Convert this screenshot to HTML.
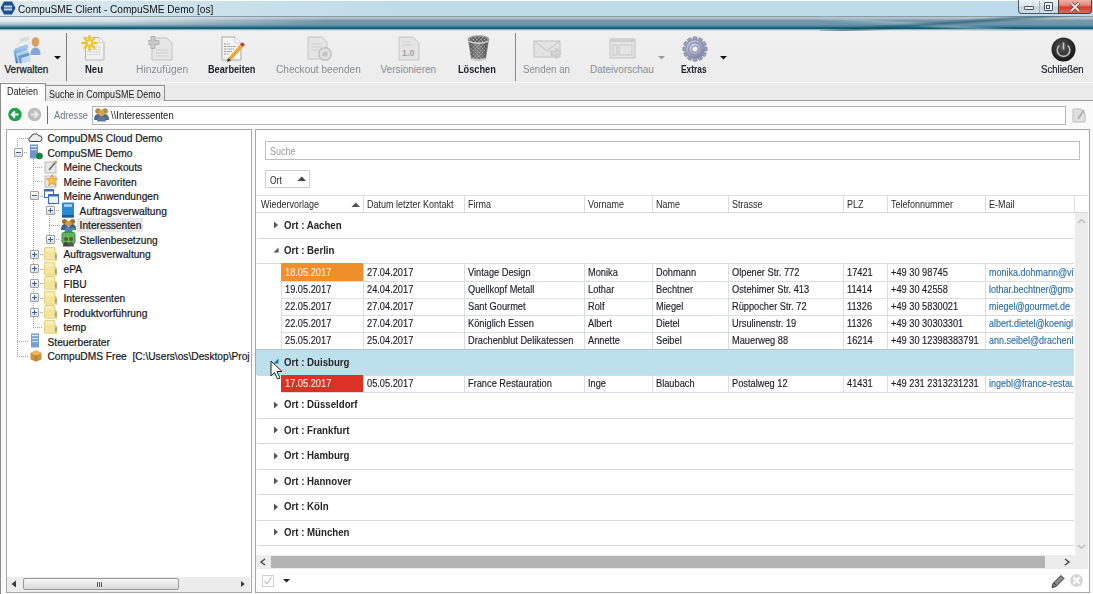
<!DOCTYPE html><html><head><meta charset="utf-8"><style>
*{box-sizing:border-box;margin:0;padding:0}
html,body{width:1093px;height:594px;overflow:hidden;background:#f9f9f9;font-family:"Liberation Sans",sans-serif;color:#1a1a1a}
div,span,svg{position:absolute}
.t{white-space:nowrap;line-height:12px}
.sx{transform-origin:0 50%}
</style></head><body>
<div style="left:0px;top:0px;width:1093px;height:16px;background:linear-gradient(90deg,#dde9ef 0,#cfe3ec 150px,#bfdbe9 400px,#bddbea 1093px);border-top:1px solid #f8fafa"></div>
<svg style="left:0px;top:1px" width="16" height="14" viewBox="0 0 16 14"><polygon points="4,0.5 12,0.5 15.5,7 12,13.5 4,13.5 0.5,7" fill="#1f4f8e"/><rect x="4" y="4.5" width="8" height="5" fill="#c6d4e4"/><rect x="4" y="6.5" width="8" height="1" fill="#1f4f8e"/></svg>
<div class="t sx" style="left:18px;top:3.5px;font-size:10px;color:#101010;font-weight:400;transform:scaleX(1.01);">CompuSME Client - CompuSME Demo [os]</div>
<div style="left:1018px;top:0px;width:41px;height:14px;background:linear-gradient(180deg,#eef3f7 0,#dbe5ec 45%,#c3d2dc 55%,#cfdde6 100%);border:1px solid #4f5a63;border-top:none;border-right:none;border-radius:0 0 0 4px"></div>
<div style="left:1039px;top:1px;width:1px;height:12px;background:#a6b2bb"></div>
<div style="left:1058px;top:0px;width:34px;height:14px;background:linear-gradient(180deg,#f1b3aa 0,#e6857a 40%,#cf3e2e 55%,#dc6a5c 100%);border:1px solid #4f3d3b;border-top:none;border-radius:0 0 4px 0"></div>
<div style="left:1024px;top:6px;width:10px;height:4px;background:#f4f6f8;border:1px solid #4b545c;border-radius:1px"></div>
<div style="left:1044px;top:2px;width:9px;height:9px;border:1px solid #4b545c;background:#eef2f5;border-radius:1px"></div>
<div style="left:1046px;top:5px;width:4px;height:4px;border:1px solid #4b545c"></div>
<svg style="left:1069px;top:2px" width="12" height="10" viewBox="0 0 12 10"><path d="M2,1 L10,9 M10,1 L2,9" stroke="#5a3a36" stroke-width="3.2"/><path d="M2,1 L10,9 M10,1 L2,9" stroke="#f1ece9" stroke-width="1.8"/></svg>
<div style="left:0px;top:16px;width:1093px;height:15px;background:linear-gradient(180deg,#8c9ca5 0,#8c9ca5 1px,#b4c3cc 1px,#aebfca 3px,#7a95a8 4px,#7897ab 5px,#6a95ab 8.5px,#4a86a0 10px,#3a7a93 11px,#12586f 11.8px,#12586f 12.5px,#4a8a9c 13px,#b8d0d8 13.8px,#e9eeee 15px)"></div>
<div style="left:0px;top:17px;width:330px;height:10px;background:linear-gradient(90deg,rgba(240,245,247,.9) 0,rgba(235,241,244,.8) 120px,rgba(220,230,235,.35) 250px,rgba(220,230,235,0) 330px);-webkit-mask-image:linear-gradient(180deg,#000 0,#000 40%,rgba(0,0,0,.4) 80%,transparent 100%)"></div>
<div style="left:820px;top:16px;width:273px;height:15px;background:linear-gradient(176deg,transparent 0,transparent 38%,rgba(20,80,100,.55) 47%,transparent 56%),linear-gradient(184deg,transparent 0,transparent 52%,rgba(170,200,210,.5) 60%,transparent 70%)"></div>
<div style="left:0px;top:31px;width:1093px;height:52px;background:linear-gradient(180deg,#f0f0f0,#ececec);border-bottom:1px solid #f8f8f8"></div>
<div style="left:66px;top:33px;width:1px;height:48px;background:#7b7b7b"></div>
<div style="left:515px;top:33px;width:1px;height:48px;background:#8a8a8a"></div>
<svg style="left:54px;top:56px" width="7" height="4" viewBox="0 0 7 4"><polygon points="0,0 7,0 3.5,3.5" fill="#111"/></svg>
<svg style="left:658px;top:56px" width="7" height="4" viewBox="0 0 7 4"><polygon points="0,0 7,0 3.5,3.5" fill="#9a9a9a"/></svg>
<svg style="left:720px;top:56px" width="7" height="4" viewBox="0 0 7 4"><polygon points="0,0 7,0 3.5,3.5" fill="#111"/></svg>
<div class="t sx" style="left:4.5px;top:63.5px;font-size:10px;color:#1b1f2a;font-weight:400;-webkit-text-stroke:.25px #1b1f2a">Verwalten</div>
<div class="t sx" style="left:85px;top:63.5px;font-size:10px;color:#1b1f2a;font-weight:700;transform:scaleX(0.95);">Neu</div>
<div class="t sx" style="left:135.5px;top:63.5px;font-size:10px;color:#878d95;font-weight:400;transform:scaleX(1.03);">Hinzufügen</div>
<div class="t sx" style="left:208px;top:63.5px;font-size:10px;color:#1b1f2a;font-weight:700;transform:scaleX(0.917);">Bearbeiten</div>
<div class="t sx" style="left:276px;top:63.5px;font-size:10px;color:#878d95;font-weight:400;transform:scaleX(1.01);">Checkout beenden</div>
<div class="t sx" style="left:380.5px;top:63.5px;font-size:10px;color:#878d95;font-weight:400;">Versionieren</div>
<div class="t sx" style="left:458px;top:63.5px;font-size:10px;color:#1b1f2a;font-weight:700;transform:scaleX(0.92);">Löschen</div>
<div class="t sx" style="left:523px;top:63.5px;font-size:10px;color:#878d95;font-weight:400;transform:scaleX(0.97);">Senden an</div>
<div class="t sx" style="left:590px;top:63.5px;font-size:10px;color:#878d95;font-weight:400;">Dateivorschau</div>
<div class="t sx" style="left:681px;top:63.5px;font-size:10px;color:#1b1f2a;font-weight:700;transform:scaleX(0.84);">Extras</div>
<div class="t sx" style="left:1041.4px;top:63.5px;font-size:10px;color:#1b1f2a;font-weight:400;transform:scaleX(0.96);-webkit-text-stroke:.2px #1b1f2a">Schließen</div>
<svg style="left:12px;top:34px" width="30" height="30" viewBox="0 0 30 30">
<defs><linearGradient id="fb" x1="0" y1="0" x2="0" y2="1"><stop offset="0" stop-color="#a9cbee"/><stop offset="1" stop-color="#3a76bd"/></linearGradient></defs>
<polygon points="7,5 16,2.5 17.5,5.5 8.5,8" fill="#dadada"/>
<polygon points="5,10 16,6.5 17.5,9.5 6.5,13" fill="#eef2f6" stroke="#c7d2de" stroke-width=".5"/>
<polygon points="2,15 15,10.5 16.5,13.5 3.5,18" fill="#9ec3ea"/>
<polygon points="1.5,17 15,12.5 17,26 4,29.5" fill="url(#fb)"/>
<polygon points="4,19.5 16,15.5 18,26 6,29" fill="#c8dcf0" opacity=".75"/>
<polygon points="6,22 17,18.5 19,27 8,29.5" fill="#5b90cf" opacity=".85"/>
<polygon points="9,24 19,21 20,27 10,29.5" fill="#e0ebf6" opacity=".8"/>
<ellipse cx="23.5" cy="8" rx="3.8" ry="4.8" fill="#d9a063"/>
<path d="M18.5,21 Q18.5,13.5 23.5,13.5 Q28.5,13.5 28.5,21 Z" fill="#86a6d6"/>
</svg>
<svg style="left:81px;top:35px" width="26" height="27" viewBox="0 0 26 27">
<defs><radialGradient id="sg" cx=".5" cy=".5" r=".5"><stop offset="0" stop-color="#fff7c0" stop-opacity=".9"/><stop offset="1" stop-color="#fff3a0" stop-opacity="0"/></radialGradient></defs>
<path d="M4.5,2.5 H18 L23,7.5 V25 H4.5 Z" fill="#f1f1f1" stroke="#b5b5b5" stroke-width="1"/>
<path d="M18,2.5 V7.5 H23" fill="#fafafa" stroke="#c8c8c8" stroke-width=".8"/>
<g stroke="#c4c4c4" stroke-width=".8" stroke-dasharray="1.5 .8"><line x1="10" y1="12" x2="20" y2="12"/><line x1="10" y1="14.5" x2="20" y2="14.5"/><line x1="6" y1="17" x2="20" y2="17"/><line x1="6" y1="19.5" x2="20" y2="19.5"/></g>
<circle cx="8.5" cy="8" r="8" fill="url(#sg)"/>
<g stroke="#eec22a" stroke-width="2.4" stroke-linecap="round"><line x1="8.5" y1="1" x2="8.5" y2="15"/><line x1="1.5" y1="8" x2="15.5" y2="8"/><line x1="3.5" y1="3" x2="13.5" y2="13"/><line x1="13.5" y1="3" x2="3.5" y2="13"/></g>
<circle cx="8.5" cy="8" r="1.8" fill="#fffbe8"/>
</svg>
<svg style="left:148px;top:35px" width="26" height="27" viewBox="0 0 26 27">
<path d="M4,3 H19 L24,8 V25 H4 Z" fill="#e6e6e6" stroke="#c3c3c3"/>
<g stroke="#cfcfcf"><line x1="8" y1="15" x2="20" y2="15"/><line x1="8" y1="18" x2="20" y2="18"/><line x1="8" y1="21" x2="20" y2="21"/></g>
<path d="M3,1.5 h4 v4 h4 v4 h-4 v4 h-4 v-4 h-4 v-4 h4 z" fill="#c9c9c9" stroke="#aaaaaa" stroke-width=".8"/>
</svg>
<svg style="left:220px;top:35px" width="26" height="28" viewBox="0 0 26 28">
<path d="M2,2 H15 L21,8 V25 H2 Z" fill="#f5f5f5" stroke="#a8a8a8"/><path d="M15,2 V8 H21" fill="#fff" stroke="#c0c0c0" stroke-width=".8"/>
<g stroke="#6a6a6a" stroke-width=".7" stroke-dasharray="2 .7 1 .7"><line x1="4" y1="9" x2="10" y2="9"/><line x1="4" y1="11.5" x2="16" y2="11.5"/><line x1="4" y1="14" x2="14" y2="14"/><line x1="4" y1="16.5" x2="12" y2="16.5"/><line x1="4" y1="19" x2="9" y2="19"/></g>
<line x1="23" y1="9" x2="9" y2="25" stroke="#e9a83a" stroke-width="3.6"/>
<line x1="23.5" y1="8.4" x2="21.5" y2="10.6" stroke="#c4332e" stroke-width="3.6"/>
<polygon points="7,27 8,23 11,25.5" fill="#333"/>
</svg>
<svg style="left:307px;top:36px" width="26" height="26" viewBox="0 0 26 26">
<path d="M1,1 H15 L20,6 V23 H1 Z" fill="#e4e4e4" stroke="#c6c6c6"/>
<g stroke="#d0d0d0"><line x1="4" y1="8" x2="14" y2="8"/><line x1="4" y1="11" x2="14" y2="11"/><line x1="4" y1="14" x2="12" y2="14"/></g>
<circle cx="18" cy="18" r="6.2" fill="#e2e2e2" stroke="#c0c0c0" stroke-width="1.4"/>
<rect x="15.5" y="15.5" width="5" height="5" fill="#c4c4c4"/>
</svg>
<svg style="left:398px;top:36px" width="24" height="26" viewBox="0 0 24 26">
<path d="M1,1 H15 L21,7 V24 H1 Z" fill="#e4e4e4" stroke="#c6c6c6"/>
<g stroke="#d3d3d3"><line x1="4" y1="6" x2="12" y2="6"/><line x1="4" y1="9" x2="14" y2="9"/></g>
<text x="4" y="20" font-family="Liberation Sans" font-weight="bold" font-size="9" fill="#a6a6a6">1.0</text>
</svg>
<svg style="left:466px;top:34px" width="26" height="28" viewBox="0 0 26 28">
<defs><pattern id="mesh" width="2.6" height="2.6" patternUnits="userSpaceOnUse" patternTransform="rotate(45)"><rect width="2.6" height="2.6" fill="#3c3c3c"/><rect x=".5" y=".5" width="1.6" height="1.6" fill="#d4d4d4"/></pattern>
<linearGradient id="tsh" x1="0" x2="1"><stop offset="0" stop-color="#000" stop-opacity=".3"/><stop offset=".45" stop-color="#fff" stop-opacity=".15"/><stop offset="1" stop-color="#000" stop-opacity=".35"/></linearGradient></defs>
<path d="M2.5,6 L5.5,25 Q12.5,27.5 19.5,25 L22.5,6 Z" fill="url(#mesh)"/>
<path d="M2.5,6 L5.5,25 Q12.5,27.5 19.5,25 L22.5,6 Z" fill="url(#tsh)" stroke="#777" stroke-width=".7"/>
<ellipse cx="12.5" cy="5.5" rx="10.2" ry="3.6" fill="url(#mesh)" stroke="#9a9a9a" stroke-width="1.4"/>
<path d="M2.5,7.5 Q12.5,11 22.5,7.5" fill="none" stroke="#d8d8d8" stroke-width="1.3"/>
<path d="M5.5,24.5 Q12.5,27.5 19.5,24.5" fill="none" stroke="#d0d0d0" stroke-width="1.6"/>
</svg>
<svg style="left:533px;top:40px" width="29" height="20" viewBox="0 0 29 20">
<rect x="1" y="1" width="26" height="16" fill="#e3e3e3" stroke="#c2c2c2"/>
<polyline points="1,1 14,11 27,1" fill="none" stroke="#c2c2c2"/>
<polygon points="18,11 23,11 23,8 28,13.5 23,19 23,16 18,16" fill="#d2d2d2" stroke="#bdbdbd" stroke-width=".7"/>
</svg>
<svg style="left:609px;top:38px" width="27" height="21" viewBox="0 0 27 21">
<rect x="1" y="1" width="25" height="19" fill="#e4e4e4" stroke="#c3c3c3"/>
<rect x="1" y="1" width="25" height="3" fill="#cfcfcf"/>
<rect x="4" y="7" width="4" height="10" fill="none" stroke="#c9c9c9"/>
<rect x="10" y="7" width="13" height="10" fill="none" stroke="#c9c9c9"/>
</svg>
<svg style="left:682px;top:36px" width="26" height="26" viewBox="0 0 26 26"><rect x="11" y="0.8" width="4" height="5" rx=".8" fill="#9ea2bf" stroke="#777b98" stroke-width=".6" transform="rotate(0 13 13)"/><rect x="11" y="0.8" width="4" height="5" rx=".8" fill="#9ea2bf" stroke="#777b98" stroke-width=".6" transform="rotate(30 13 13)"/><rect x="11" y="0.8" width="4" height="5" rx=".8" fill="#9ea2bf" stroke="#777b98" stroke-width=".6" transform="rotate(60 13 13)"/><rect x="11" y="0.8" width="4" height="5" rx=".8" fill="#9ea2bf" stroke="#777b98" stroke-width=".6" transform="rotate(90 13 13)"/><rect x="11" y="0.8" width="4" height="5" rx=".8" fill="#9ea2bf" stroke="#777b98" stroke-width=".6" transform="rotate(120 13 13)"/><rect x="11" y="0.8" width="4" height="5" rx=".8" fill="#9ea2bf" stroke="#777b98" stroke-width=".6" transform="rotate(150 13 13)"/><rect x="11" y="0.8" width="4" height="5" rx=".8" fill="#9ea2bf" stroke="#777b98" stroke-width=".6" transform="rotate(180 13 13)"/><rect x="11" y="0.8" width="4" height="5" rx=".8" fill="#9ea2bf" stroke="#777b98" stroke-width=".6" transform="rotate(210 13 13)"/><rect x="11" y="0.8" width="4" height="5" rx=".8" fill="#9ea2bf" stroke="#777b98" stroke-width=".6" transform="rotate(240 13 13)"/><rect x="11" y="0.8" width="4" height="5" rx=".8" fill="#9ea2bf" stroke="#777b98" stroke-width=".6" transform="rotate(270 13 13)"/><rect x="11" y="0.8" width="4" height="5" rx=".8" fill="#9ea2bf" stroke="#777b98" stroke-width=".6" transform="rotate(300 13 13)"/><rect x="11" y="0.8" width="4" height="5" rx=".8" fill="#9ea2bf" stroke="#777b98" stroke-width=".6" transform="rotate(330 13 13)"/>
<defs><radialGradient id="gg" cx=".4" cy=".35" r=".75"><stop offset="0" stop-color="#dcdff0"/><stop offset=".6" stop-color="#a4a8c6"/><stop offset="1" stop-color="#6f7496"/></radialGradient></defs>
<circle cx="13" cy="13" r="9.3" fill="url(#gg)" stroke="#80849f" stroke-width=".6"/>
<circle cx="13" cy="13" r="6.3" fill="none" stroke="#8a8eae" stroke-width="1.2"/>
<circle cx="13" cy="13" r="3.2" fill="#f4f4f6" stroke="#6d7190" stroke-width=".8"/>
</svg>
<svg style="left:1051px;top:37px" width="25" height="25" viewBox="0 0 25 25">
<defs><radialGradient id="pg" cx=".45" cy=".4" r=".65"><stop offset="0" stop-color="#5a5a5a"/><stop offset=".7" stop-color="#252525"/><stop offset="1" stop-color="#0e0e0e"/></radialGradient></defs>
<circle cx="12.5" cy="12.5" r="12" fill="url(#pg)"/>
<path d="M8.2,8.5 A6.3,6.3 0 1 0 16.8,8.5" fill="none" stroke="#bfbfbf" stroke-width="1.6"/>
<line x1="12.5" y1="5.5" x2="12.5" y2="12.5" stroke="#c9c9c9" stroke-width="1.6"/>
</svg>
<div style="left:0px;top:83px;width:1093px;height:17px;background:#ebebeb"></div>
<div style="left:0px;top:100px;width:1093px;height:1px;background:#9e9e9e"></div>
<div style="left:45px;top:85px;width:120px;height:16px;background:linear-gradient(180deg,#f4f4f4,#e2e2e2);border:1px solid #8f8f8f;border-bottom:none"></div>
<div style="left:1px;top:83px;width:45px;height:18px;background:#fdfdfd;border:1px solid #8a8a8a;border-bottom:none;border-left:none"></div>
<div class="t sx" style="left:7px;top:86.2px;font-size:10px;color:#1a1a1a;font-weight:400;transform:scaleX(0.9);">Dateien</div>
<div class="t sx" style="left:49px;top:88.5px;font-size:10px;color:#1a1a1a;font-weight:400;transform:scaleX(0.893);">Suche in CompuSME Demo</div>
<div style="left:0px;top:101px;width:1093px;height:28px;background:#fafafa"></div>
<svg style="left:8px;top:107px" width="15" height="15" viewBox="0 0 15 15"><circle cx="7" cy="7.5" r="6.8" fill="#1ea34a"/><path d="M10.5,7.5 H4 M7,4.2 L3.8,7.5 L7,10.8" fill="none" stroke="#fff" stroke-width="2"/></svg>
<svg style="left:27px;top:107px" width="15" height="15" viewBox="0 0 15 15"><circle cx="7.5" cy="7.5" r="6.8" fill="#bdbdbd"/><path d="M4,7.5 H10.5 M7.5,4.2 L10.7,7.5 L7.5,10.8" fill="none" stroke="#eaeaea" stroke-width="2"/></svg>
<div style="left:47px;top:106px;width:1px;height:18px;background:#6e6e6e"></div>
<div class="t sx" style="left:53.6px;top:109.5px;font-size:10px;color:#6d7888;font-weight:400;transform:scaleX(0.925);">Adresse</div>
<div style="left:91.5px;top:105.5px;width:974px;height:19px;background:#fff;border:1px solid #b5b5b5"></div>
<svg style="left:94px;top:107px" width="15" height="15" viewBox="0 0 15 15">
<circle cx="4" cy="4" r="2.8" fill="#b8893f"/><circle cx="11" cy="4" r="2.8" fill="#b8893f"/>
<path d="M0,13 Q0,7 4,7 Q8,7 8,13 Z" fill="#4d6a8a"/><path d="M7,13 Q7,7 11,7 Q15,7 15,13 Z" fill="#4d6a8a"/>
<circle cx="7.5" cy="6" r="3" fill="#d7a550"/><path d="M3,14.5 Q3,9 7.5,9 Q12,9 12,14.5 Z" fill="#5a78a0"/>
</svg>
<div class="t sx" style="left:110.5px;top:110px;font-size:10px;color:#1a1a1a;font-weight:400;transform:scaleX(0.947);">\\Interessenten</div>
<svg style="left:1071px;top:107px" width="16" height="17" viewBox="0 0 16 17"><path d="M2,2 H10 L14,6 V15 H2 Z" fill="#e0e0e0" stroke="#bdbdbd"/><line x1="13" y1="3" x2="7" y2="12" stroke="#b0b0b0" stroke-width="2"/></svg>
<div style="left:0px;top:83px;width:1px;height:511px;background:#8d8d8d"></div>
<div style="left:6px;top:129px;width:246px;height:464px;background:#fff;border:1px solid #a7a7a7"></div>
<div style="left:255px;top:129px;width:835px;height:464px;background:#fff;border:1px solid #a7a7a7"></div>
<div style="left:77px;top:218px;width:66px;height:14px;background:#e6e6e6"></div>
<div style="left:17px;top:138px;width:1px;height:219px;background:repeating-linear-gradient(180deg,#a0a0a0 0,#a0a0a0 1px,transparent 1px,transparent 2px)"></div>
<div style="left:33px;top:157px;width:1px;height:170px;background:repeating-linear-gradient(180deg,#a0a0a0 0,#a0a0a0 1px,transparent 1px,transparent 2px)"></div>
<div style="left:49px;top:200px;width:1px;height:40px;background:repeating-linear-gradient(180deg,#a0a0a0 0,#a0a0a0 1px,transparent 1px,transparent 2px)"></div>
<div style="left:17px;top:138px;width:11px;height:1px;background:repeating-linear-gradient(90deg,#a0a0a0 0,#a0a0a0 1px,transparent 1px,transparent 2px)"></div>
<svg style="left:28px;top:131.6px" width="15" height="11" viewBox="0 0 15 11"><path d="M3,9.5 Q0.5,9.5 0.8,7 Q1,5 3,5 Q3.5,2 6.5,2 Q9,1 10.5,3.5 Q13.8,3.5 14,6.5 Q14,9.5 11.5,9.5 Z" fill="#ececec" stroke="#3f3f3f" stroke-width="1"/></svg>
<div class="t sx" style="left:47.5px;top:133.0px;font-size:10.2px;color:#15151c;font-weight:400;-webkit-text-stroke:.2px #15151c">CompuDMS Cloud Demo</div>
<div style="left:20px;top:152px;width:8px;height:1px;background:repeating-linear-gradient(90deg,#a0a0a0 0,#a0a0a0 1px,transparent 1px,transparent 2px)"></div>
<div style="left:14px;top:148px;width:9px;height:9px;background:linear-gradient(180deg,#fdfdfd,#dedede);border:1px solid #a0a0a0;border-radius:1px"></div>
<div style="left:16px;top:152px;width:5px;height:1px;background:#3b5f9a"></div>
<svg style="left:29px;top:144.15px" width="14" height="16" viewBox="0 0 14 16"><rect x="1" y="0.5" width="8" height="14" fill="#6f97c6"/><rect x="2" y="2" width="6" height="1.2" fill="#e4eef8"/><rect x="2" y="5" width="6" height="1.2" fill="#cfe0f0"/><circle cx="10.5" cy="12" r="3" fill="#0e8a2a" stroke="#063" stroke-width=".6"/></svg>
<div class="t sx" style="left:47.5px;top:147.55px;font-size:10.2px;color:#15151c;font-weight:400;-webkit-text-stroke:.2px #15151c">CompuSME Demo</div>
<div style="left:33px;top:167px;width:10px;height:1px;background:repeating-linear-gradient(90deg,#a0a0a0 0,#a0a0a0 1px,transparent 1px,transparent 2px)"></div>
<svg style="left:44px;top:159.7px" width="14" height="14" viewBox="0 0 14 14"><rect x="1" y="2" width="11" height="11" fill="#e8e8e8" stroke="#b9b9b9"/><line x1="12.5" y1="1" x2="5" y2="10" stroke="#6b6b6b" stroke-width="1.6"/><line x1="12.5" y1="1" x2="11" y2="3" stroke="#d9a23a" stroke-width="1.8"/></svg>
<div class="t sx" style="left:63.5px;top:162.1px;font-size:10.2px;color:#15151c;font-weight:400;-webkit-text-stroke:.2px #15151c">Meine Checkouts</div>
<div style="left:33px;top:181px;width:10px;height:1px;background:repeating-linear-gradient(90deg,#a0a0a0 0,#a0a0a0 1px,transparent 1px,transparent 2px)"></div>
<svg style="left:44px;top:174.25px" width="14" height="14" viewBox="0 0 14 14"><rect x="1" y="2" width="11" height="11" fill="#e8e8e8" stroke="#b9b9b9"/><polygon points="8,0.5 9.6,4.5 13.5,4.8 10.5,7.5 11.5,11.5 8,9.3 4.5,11.5 5.5,7.5 2.5,4.8 6.4,4.5" fill="#f6c33b" stroke="#e07a1f" stroke-width=".6"/></svg>
<div class="t sx" style="left:63.5px;top:176.65px;font-size:10.2px;color:#15151c;font-weight:400;-webkit-text-stroke:.2px #15151c">Meine Favoriten</div>
<div style="left:36px;top:196px;width:7px;height:1px;background:repeating-linear-gradient(90deg,#a0a0a0 0,#a0a0a0 1px,transparent 1px,transparent 2px)"></div>
<div style="left:30px;top:191px;width:9px;height:9px;background:linear-gradient(180deg,#fdfdfd,#dedede);border:1px solid #a0a0a0;border-radius:1px"></div>
<div style="left:32px;top:195px;width:5px;height:1px;background:#3b5f9a"></div>
<svg style="left:44px;top:188.8px" width="15" height="15" viewBox="0 0 15 15"><rect x="0.5" y="0.5" width="9" height="8" fill="#fff" stroke="#3c6fb4"/><rect x="0.5" y="0.5" width="9" height="2" fill="#3c6fb4"/><rect x="4.5" y="5.5" width="10" height="9" fill="#eaf1fa" stroke="#3c6fb4"/><rect x="4.5" y="5.5" width="10" height="2" fill="#3c6fb4"/></svg>
<div class="t sx" style="left:63.5px;top:191.20000000000002px;font-size:10.2px;color:#15151c;font-weight:400;-webkit-text-stroke:.2px #15151c">Meine Anwendungen</div>
<div style="left:52px;top:210px;width:8px;height:1px;background:repeating-linear-gradient(90deg,#a0a0a0 0,#a0a0a0 1px,transparent 1px,transparent 2px)"></div>
<div style="left:46px;top:206px;width:9px;height:9px;background:linear-gradient(180deg,#fdfdfd,#dedede);border:1px solid #a0a0a0;border-radius:1px"></div>
<div style="left:48px;top:210px;width:5px;height:1px;background:#3b5f9a"></div>
<div style="left:50px;top:208px;width:1px;height:5px;background:#3b5f9a"></div>
<svg style="left:61px;top:202.35px" width="14" height="16" viewBox="0 0 14 16"><rect x="1" y="0.5" width="12" height="15" rx="1" fill="#2b87cf"/><rect x="3" y="2" width="8" height="3" fill="#9fd0f2"/><rect x="1" y="13" width="12" height="2.5" fill="#1b5e9a"/></svg>
<div class="t sx" style="left:79.6px;top:205.75px;font-size:10.2px;color:#15151c;font-weight:400;-webkit-text-stroke:.2px #15151c">Auftragsverwaltung</div>
<div style="left:49px;top:225px;width:11px;height:1px;background:repeating-linear-gradient(90deg,#a0a0a0 0,#a0a0a0 1px,transparent 1px,transparent 2px)"></div>
<svg style="left:61px;top:217.9px" width="15" height="14" viewBox="0 0 15 14"><circle cx="3.5" cy="3.5" r="2.5" fill="#a46c2d"/><circle cx="11.5" cy="3.5" r="2.5" fill="#a46c2d"/><path d="M0,12 Q0,6 3.5,6 Q7,6 7,12Z" fill="#3f5f85"/><path d="M8,12 Q8,6 11.5,6 Q15,6 15,12Z" fill="#3f5f85"/><circle cx="7.5" cy="5.5" r="2.8" fill="#d09a4b"/><path d="M3.5,14 Q3.5,8.5 7.5,8.5 Q11.5,8.5 11.5,14Z" fill="#4f7fae"/><circle cx="12" cy="11" r="1.6" fill="#3fae49"/></svg>
<div class="t sx" style="left:79.6px;top:220.3px;font-size:10.2px;color:#15151c;font-weight:400;-webkit-text-stroke:.2px #15151c">Interessenten</div>
<div style="left:52px;top:239px;width:8px;height:1px;background:repeating-linear-gradient(90deg,#a0a0a0 0,#a0a0a0 1px,transparent 1px,transparent 2px)"></div>
<div style="left:46px;top:235px;width:9px;height:9px;background:linear-gradient(180deg,#fdfdfd,#dedede);border:1px solid #a0a0a0;border-radius:1px"></div>
<div style="left:48px;top:239px;width:5px;height:1px;background:#3b5f9a"></div>
<div style="left:50px;top:237px;width:1px;height:5px;background:#3b5f9a"></div>
<svg style="left:61px;top:232.45px" width="15" height="15" viewBox="0 0 15 15"><rect x="1" y="0.5" width="13" height="11" rx="1.5" fill="#5cb85c" stroke="#3d8f3d"/><circle cx="5" cy="7" r="2" fill="#6b5230"/><circle cx="10" cy="7" r="2" fill="#6b5230"/><path d="M2,14.5 Q2,10 5,10 Q8,10 8,14.5Z" fill="#444"/><path d="M7,14.5 Q7,10 10,10 Q13,10 13,14.5Z" fill="#555"/></svg>
<div class="t sx" style="left:79.6px;top:234.85px;font-size:10.2px;color:#15151c;font-weight:400;-webkit-text-stroke:.2px #15151c">Stellenbesetzung</div>
<div style="left:36px;top:254px;width:7px;height:1px;background:repeating-linear-gradient(90deg,#a0a0a0 0,#a0a0a0 1px,transparent 1px,transparent 2px)"></div>
<div style="left:30px;top:250px;width:9px;height:9px;background:linear-gradient(180deg,#fdfdfd,#dedede);border:1px solid #a0a0a0;border-radius:1px"></div>
<div style="left:32px;top:254px;width:5px;height:1px;background:#3b5f9a"></div>
<div style="left:34px;top:252px;width:1px;height:5px;background:#3b5f9a"></div>
<svg style="left:44px;top:247.0px" width="14" height="15" viewBox="0 0 14 15"><rect x="0.5" y="0.5" width="10.5" height="12.8" rx=".8" fill="#f3e59a" stroke="#dcc56a" stroke-width=".7"/><rect x="1.5" y="1.5" width="8" height="3" fill="#f8efbd"/><path d="M11,5 L13,6.5 V13.5 H11 Z" fill="#d8bd62"/><rect x="11.3" y="8" width="1.2" height="3" fill="#6a9ac8"/></svg>
<div class="t sx" style="left:63.5px;top:249.4px;font-size:10.2px;color:#15151c;font-weight:400;-webkit-text-stroke:.2px #15151c">Auftragsverwaltung</div>
<div style="left:36px;top:269px;width:7px;height:1px;background:repeating-linear-gradient(90deg,#a0a0a0 0,#a0a0a0 1px,transparent 1px,transparent 2px)"></div>
<div style="left:30px;top:264px;width:9px;height:9px;background:linear-gradient(180deg,#fdfdfd,#dedede);border:1px solid #a0a0a0;border-radius:1px"></div>
<div style="left:32px;top:268px;width:5px;height:1px;background:#3b5f9a"></div>
<div style="left:34px;top:266px;width:1px;height:5px;background:#3b5f9a"></div>
<svg style="left:44px;top:261.55px" width="14" height="15" viewBox="0 0 14 15"><rect x="0.5" y="0.5" width="10.5" height="12.8" rx=".8" fill="#f3e59a" stroke="#dcc56a" stroke-width=".7"/><rect x="1.5" y="1.5" width="8" height="3" fill="#f8efbd"/><path d="M11,5 L13,6.5 V13.5 H11 Z" fill="#d8bd62"/><rect x="11.3" y="8" width="1.2" height="3" fill="#6a9ac8"/></svg>
<div class="t sx" style="left:63.5px;top:263.95px;font-size:10.2px;color:#15151c;font-weight:400;-webkit-text-stroke:.2px #15151c">ePA</div>
<div style="left:36px;top:283px;width:7px;height:1px;background:repeating-linear-gradient(90deg,#a0a0a0 0,#a0a0a0 1px,transparent 1px,transparent 2px)"></div>
<div style="left:30px;top:279px;width:9px;height:9px;background:linear-gradient(180deg,#fdfdfd,#dedede);border:1px solid #a0a0a0;border-radius:1px"></div>
<div style="left:32px;top:283px;width:5px;height:1px;background:#3b5f9a"></div>
<div style="left:34px;top:281px;width:1px;height:5px;background:#3b5f9a"></div>
<svg style="left:44px;top:276.1px" width="14" height="15" viewBox="0 0 14 15"><rect x="0.5" y="0.5" width="10.5" height="12.8" rx=".8" fill="#f3e59a" stroke="#dcc56a" stroke-width=".7"/><rect x="1.5" y="1.5" width="8" height="3" fill="#f8efbd"/><path d="M11,5 L13,6.5 V13.5 H11 Z" fill="#d8bd62"/><rect x="11.3" y="8" width="1.2" height="3" fill="#6a9ac8"/></svg>
<div class="t sx" style="left:63.5px;top:278.5px;font-size:10.2px;color:#15151c;font-weight:400;-webkit-text-stroke:.2px #15151c">FIBU</div>
<div style="left:36px;top:298px;width:7px;height:1px;background:repeating-linear-gradient(90deg,#a0a0a0 0,#a0a0a0 1px,transparent 1px,transparent 2px)"></div>
<div style="left:30px;top:293px;width:9px;height:9px;background:linear-gradient(180deg,#fdfdfd,#dedede);border:1px solid #a0a0a0;border-radius:1px"></div>
<div style="left:32px;top:297px;width:5px;height:1px;background:#3b5f9a"></div>
<div style="left:34px;top:295px;width:1px;height:5px;background:#3b5f9a"></div>
<svg style="left:44px;top:290.65px" width="14" height="15" viewBox="0 0 14 15"><rect x="0.5" y="0.5" width="10.5" height="12.8" rx=".8" fill="#f3e59a" stroke="#dcc56a" stroke-width=".7"/><rect x="1.5" y="1.5" width="8" height="3" fill="#f8efbd"/><path d="M11,5 L13,6.5 V13.5 H11 Z" fill="#d8bd62"/><rect x="11.3" y="8" width="1.2" height="3" fill="#6a9ac8"/></svg>
<div class="t sx" style="left:63.5px;top:293.04999999999995px;font-size:10.2px;color:#15151c;font-weight:400;-webkit-text-stroke:.2px #15151c">Interessenten</div>
<div style="left:36px;top:312px;width:7px;height:1px;background:repeating-linear-gradient(90deg,#a0a0a0 0,#a0a0a0 1px,transparent 1px,transparent 2px)"></div>
<div style="left:30px;top:308px;width:9px;height:9px;background:linear-gradient(180deg,#fdfdfd,#dedede);border:1px solid #a0a0a0;border-radius:1px"></div>
<div style="left:32px;top:312px;width:5px;height:1px;background:#3b5f9a"></div>
<div style="left:34px;top:310px;width:1px;height:5px;background:#3b5f9a"></div>
<svg style="left:44px;top:305.20000000000005px" width="14" height="15" viewBox="0 0 14 15"><rect x="0.5" y="0.5" width="10.5" height="12.8" rx=".8" fill="#f3e59a" stroke="#dcc56a" stroke-width=".7"/><rect x="1.5" y="1.5" width="8" height="3" fill="#f8efbd"/><path d="M11,5 L13,6.5 V13.5 H11 Z" fill="#d8bd62"/><rect x="11.3" y="8" width="1.2" height="3" fill="#6a9ac8"/></svg>
<div class="t sx" style="left:63.5px;top:307.6px;font-size:10.2px;color:#15151c;font-weight:400;-webkit-text-stroke:.2px #15151c">Produktvorführung</div>
<div style="left:33px;top:327px;width:10px;height:1px;background:repeating-linear-gradient(90deg,#a0a0a0 0,#a0a0a0 1px,transparent 1px,transparent 2px)"></div>
<svg style="left:44px;top:319.75px" width="14" height="15" viewBox="0 0 14 15"><rect x="0.5" y="0.5" width="10.5" height="12.8" rx=".8" fill="#f3e59a" stroke="#dcc56a" stroke-width=".7"/><rect x="1.5" y="1.5" width="8" height="3" fill="#f8efbd"/><path d="M11,5 L13,6.5 V13.5 H11 Z" fill="#d8bd62"/><rect x="11.3" y="8" width="1.2" height="3" fill="#6a9ac8"/></svg>
<div class="t sx" style="left:63.5px;top:322.15px;font-size:10.2px;color:#15151c;font-weight:400;-webkit-text-stroke:.2px #15151c">temp</div>
<div style="left:17px;top:341px;width:11px;height:1px;background:repeating-linear-gradient(90deg,#a0a0a0 0,#a0a0a0 1px,transparent 1px,transparent 2px)"></div>
<svg style="left:30px;top:333.3px" width="12" height="16" viewBox="0 0 12 16"><rect x="1" y="0.5" width="8" height="14" fill="#7aa0cf"/><rect x="2" y="2" width="6" height="1.2" fill="#e4eef8"/><rect x="2" y="5" width="6" height="1.2" fill="#cfe0f0"/><rect x="2" y="8" width="6" height="1" fill="#cfe0f0"/></svg>
<div class="t sx" style="left:47.5px;top:336.7px;font-size:10.2px;color:#15151c;font-weight:400;-webkit-text-stroke:.2px #15151c">Steuerberater</div>
<div style="left:17px;top:356px;width:11px;height:1px;background:repeating-linear-gradient(90deg,#a0a0a0 0,#a0a0a0 1px,transparent 1px,transparent 2px)"></div>
<svg style="left:30px;top:349.85px" width="12" height="12" viewBox="0 0 12 12"><polygon points="6,0.5 11.5,3 11.5,9.5 6,11.5 0.5,9.5 0.5,3" fill="#c9923a"/><polygon points="6,0.5 11.5,3 6,5.5 0.5,3" fill="#e8b866"/><line x1="6" y1="5.5" x2="6" y2="11.5" stroke="#9b6a22" stroke-width=".8"/></svg>
<div class="t sx" style="left:47.5px;top:351.25px;font-size:10.2px;color:#15151c;font-weight:400;-webkit-text-stroke:.2px #15151c">CompuDMS Free&nbsp; [C:\Users\os\Desktop\Proj</div>
<div style="left:7px;top:577px;width:243px;height:15px;background:#ececec"></div>
<svg style="left:10px;top:580px" width="8" height="8" viewBox="0 0 8 8"><polygon points="6,0.5 6,7.5 1.5,4" fill="#3a3a3a"/></svg>
<svg style="left:239px;top:580px" width="8" height="8" viewBox="0 0 8 8"><polygon points="2,1 2,7 5.8,4" fill="#3a3a3a"/></svg>
<div style="left:23px;top:578px;width:156px;height:12px;background:linear-gradient(180deg,#f7f7f7,#dadada);border:1px solid #9a9a9a;border-radius:2px"></div>
<div style="left:97px;top:582px;width:1px;height:5px;background:#555"></div>
<div style="left:99px;top:582px;width:1px;height:5px;background:#555"></div>
<div style="left:101px;top:582px;width:1px;height:5px;background:#555"></div>
<div style="left:265px;top:141px;width:815px;height:19px;background:#fff;border:1px solid #bdbdbd"></div>
<div class="t sx" style="left:270px;top:145.5px;font-size:10px;color:#9a9a9a;font-weight:400;transform:scaleX(0.9);">Suche</div>
<div style="left:265px;top:170px;width:45px;height:18px;background:#fff;border:1px solid #cfcfcf"></div>
<div class="t sx" style="left:269.6px;top:174.7px;font-size:10px;color:#2a2a2a;font-weight:400;transform:scaleX(0.85);">Ort</div>
<svg style="left:297px;top:176px" width="10" height="6" viewBox="0 0 10 6"><polygon points="0.5,5 9,5 4.75,0.5" fill="#444"/></svg>
<div style="left:256px;top:195px;width:832px;height:18px;background:#fff;border-top:1px solid #dedede;border-bottom:1px solid #d9d9d9"></div>
<div style="left:363px;top:196px;width:1px;height:16px;background:#dcdcdc"></div>
<div style="left:464px;top:196px;width:1px;height:16px;background:#dcdcdc"></div>
<div style="left:584px;top:196px;width:1px;height:16px;background:#dcdcdc"></div>
<div style="left:652px;top:196px;width:1px;height:16px;background:#dcdcdc"></div>
<div style="left:728px;top:196px;width:1px;height:16px;background:#dcdcdc"></div>
<div style="left:843px;top:196px;width:1px;height:16px;background:#dcdcdc"></div>
<div style="left:887px;top:196px;width:1px;height:16px;background:#dcdcdc"></div>
<div style="left:985px;top:196px;width:1px;height:16px;background:#dcdcdc"></div>
<div style="left:1074px;top:196px;width:1px;height:16px;background:#dcdcdc"></div>
<div class="t sx" style="left:260.5px;top:198.5px;font-size:10px;color:#2a2a2a;font-weight:400;transform:scaleX(0.9);">Wiedervorlage</div>
<div class="t sx" style="left:366.5px;top:198.5px;font-size:10px;color:#2a2a2a;font-weight:400;transform:scaleX(0.9);">Datum letzter Kontakt</div>
<div class="t sx" style="left:467.5px;top:198.5px;font-size:10px;color:#2a2a2a;font-weight:400;transform:scaleX(0.9);">Firma</div>
<div class="t sx" style="left:587.5px;top:198.5px;font-size:10px;color:#2a2a2a;font-weight:400;transform:scaleX(0.9);">Vorname</div>
<div class="t sx" style="left:655.5px;top:198.5px;font-size:10px;color:#2a2a2a;font-weight:400;transform:scaleX(0.9);">Name</div>
<div class="t sx" style="left:731.5px;top:198.5px;font-size:10px;color:#2a2a2a;font-weight:400;transform:scaleX(0.9);">Strasse</div>
<div class="t sx" style="left:846.5px;top:198.5px;font-size:10px;color:#2a2a2a;font-weight:400;transform:scaleX(0.9);">PLZ</div>
<div class="t sx" style="left:890.5px;top:198.5px;font-size:10px;color:#2a2a2a;font-weight:400;transform:scaleX(0.9);">Telefonnummer</div>
<div class="t sx" style="left:988.5px;top:198.5px;font-size:10px;color:#2a2a2a;font-weight:400;transform:scaleX(0.9);">E-Mail</div>
<svg style="left:351px;top:202px" width="10" height="6" viewBox="0 0 10 6"><polygon points="0.5,5 9,5 4.75,0.5" fill="#555"/></svg>
<div style="left:1075px;top:213px;width:13px;height:342px;background:#ececec"></div>
<svg style="left:1077px;top:218px" width="9" height="6" viewBox="0 0 9 6"><polyline points="1,5 4.5,1.5 8,5" fill="none" stroke="#b8b8b8" stroke-width="1.2"/></svg>
<svg style="left:1077px;top:544px" width="9" height="6" viewBox="0 0 9 6"><polyline points="1,1 4.5,4.5 8,1" fill="none" stroke="#b8b8b8" stroke-width="1.2"/></svg>
<div style="left:257px;top:237.9px;width:817px;height:1px;background:#d9d9d9"></div>
<svg style="left:273px;top:221.15px" width="6" height="8" viewBox="0 0 6 8"><polygon points="1,0.5 5,4 1,7.5" fill="#555"/></svg>
<div class="t sx" style="left:283.8px;top:218.65px;font-size:10.5px;color:#262626;font-weight:700;transform:scaleX(0.92);">Ort : Aachen</div>
<div style="left:257px;top:263.4px;width:817px;height:1px;background:#d9d9d9"></div>
<svg style="left:273px;top:246.65px" width="6" height="6" viewBox="0 0 6 6"><polygon points="5.5,0.5 5.5,5.5 0.5,5.5" fill="#555"/></svg>
<div class="t sx" style="left:283.8px;top:244.15px;font-size:10.5px;color:#262626;font-weight:700;transform:scaleX(0.92);">Ort : Berlin</div>
<div style="left:281px;top:280.59999999999997px;width:793px;height:1px;background:#dadde3"></div>
<div style="left:363px;top:263.4px;width:1px;height:18.2px;background:#dadde3"></div>
<div style="left:464px;top:263.4px;width:1px;height:18.2px;background:#dadde3"></div>
<div style="left:584px;top:263.4px;width:1px;height:18.2px;background:#dadde3"></div>
<div style="left:652px;top:263.4px;width:1px;height:18.2px;background:#dadde3"></div>
<div style="left:728px;top:263.4px;width:1px;height:18.2px;background:#dadde3"></div>
<div style="left:843px;top:263.4px;width:1px;height:18.2px;background:#dadde3"></div>
<div style="left:887px;top:263.4px;width:1px;height:18.2px;background:#dadde3"></div>
<div style="left:985px;top:263.4px;width:1px;height:18.2px;background:#dadde3"></div>
<div style="left:281px;top:263.4px;width:1px;height:18.2px;background:#dadde3"></div>
<div style="left:281px;top:263.4px;width:82px;height:17.2px;background:#ee8f2c"></div>
<div style="left:285px;top:266.5px;width:101px;height:13px;overflow:hidden"><div class="t sx" style="left:0;top:0;font-size:10.4px;color:#fbe9e0;transform:scaleX(0.89);-webkit-text-stroke:.15px #fbe9e0">18.05.2017</div></div>
<div style="left:367px;top:266.5px;width:96px;height:13px;overflow:hidden"><div class="t sx" style="left:0;top:0;font-size:10.4px;color:#1c1c26;transform:scaleX(0.89);-webkit-text-stroke:.15px #1c1c26">27.04.2017</div></div>
<div style="left:468px;top:266.5px;width:115px;height:13px;overflow:hidden"><div class="t sx" style="left:0;top:0;font-size:10.4px;color:#1c1c26;transform:scaleX(0.89);-webkit-text-stroke:.15px #1c1c26">Vintage Design</div></div>
<div style="left:588px;top:266.5px;width:63px;height:13px;overflow:hidden"><div class="t sx" style="left:0;top:0;font-size:10.4px;color:#1c1c26;transform:scaleX(0.89);-webkit-text-stroke:.15px #1c1c26">Monika</div></div>
<div style="left:656px;top:266.5px;width:71px;height:13px;overflow:hidden"><div class="t sx" style="left:0;top:0;font-size:10.4px;color:#1c1c26;transform:scaleX(0.89);-webkit-text-stroke:.15px #1c1c26">Dohmann</div></div>
<div style="left:732px;top:266.5px;width:110px;height:13px;overflow:hidden"><div class="t sx" style="left:0;top:0;font-size:10.4px;color:#1c1c26;transform:scaleX(0.89);-webkit-text-stroke:.15px #1c1c26">Olpener Str. 772</div></div>
<div style="left:847px;top:266.5px;width:39px;height:13px;overflow:hidden"><div class="t sx" style="left:0;top:0;font-size:10.4px;color:#1c1c26;transform:scaleX(0.89);-webkit-text-stroke:.15px #1c1c26">17421</div></div>
<div style="left:891px;top:266.5px;width:93px;height:13px;overflow:hidden"><div class="t sx" style="left:0;top:0;font-size:10.4px;color:#1c1c26;transform:scaleX(0.89);-webkit-text-stroke:.15px #1c1c26">+49 30 98745</div></div>
<div style="left:989px;top:266.5px;width:84px;height:13px;overflow:hidden"><div class="t sx" style="left:0;top:0;font-size:10.4px;color:#2d6fae;transform:scaleX(0.865);-webkit-text-stroke:.15px #2d6fae">monika.dohmann@vi</div></div>
<div style="left:281px;top:297.79999999999995px;width:793px;height:1px;background:#dadde3"></div>
<div style="left:363px;top:280.59999999999997px;width:1px;height:18.2px;background:#dadde3"></div>
<div style="left:464px;top:280.59999999999997px;width:1px;height:18.2px;background:#dadde3"></div>
<div style="left:584px;top:280.59999999999997px;width:1px;height:18.2px;background:#dadde3"></div>
<div style="left:652px;top:280.59999999999997px;width:1px;height:18.2px;background:#dadde3"></div>
<div style="left:728px;top:280.59999999999997px;width:1px;height:18.2px;background:#dadde3"></div>
<div style="left:843px;top:280.59999999999997px;width:1px;height:18.2px;background:#dadde3"></div>
<div style="left:887px;top:280.59999999999997px;width:1px;height:18.2px;background:#dadde3"></div>
<div style="left:985px;top:280.59999999999997px;width:1px;height:18.2px;background:#dadde3"></div>
<div style="left:281px;top:280.59999999999997px;width:1px;height:18.2px;background:#dadde3"></div>
<div style="left:285px;top:283.7px;width:101px;height:13px;overflow:hidden"><div class="t sx" style="left:0;top:0;font-size:10.4px;color:#1c1c26;transform:scaleX(0.89);-webkit-text-stroke:.15px #1c1c26">19.05.2017</div></div>
<div style="left:367px;top:283.7px;width:96px;height:13px;overflow:hidden"><div class="t sx" style="left:0;top:0;font-size:10.4px;color:#1c1c26;transform:scaleX(0.89);-webkit-text-stroke:.15px #1c1c26">24.04.2017</div></div>
<div style="left:468px;top:283.7px;width:115px;height:13px;overflow:hidden"><div class="t sx" style="left:0;top:0;font-size:10.4px;color:#1c1c26;transform:scaleX(0.89);-webkit-text-stroke:.15px #1c1c26">Quellkopf Metall</div></div>
<div style="left:588px;top:283.7px;width:63px;height:13px;overflow:hidden"><div class="t sx" style="left:0;top:0;font-size:10.4px;color:#1c1c26;transform:scaleX(0.89);-webkit-text-stroke:.15px #1c1c26">Lothar</div></div>
<div style="left:656px;top:283.7px;width:71px;height:13px;overflow:hidden"><div class="t sx" style="left:0;top:0;font-size:10.4px;color:#1c1c26;transform:scaleX(0.89);-webkit-text-stroke:.15px #1c1c26">Bechtner</div></div>
<div style="left:732px;top:283.7px;width:110px;height:13px;overflow:hidden"><div class="t sx" style="left:0;top:0;font-size:10.4px;color:#1c1c26;transform:scaleX(0.89);-webkit-text-stroke:.15px #1c1c26">Ostehimer Str. 413</div></div>
<div style="left:847px;top:283.7px;width:39px;height:13px;overflow:hidden"><div class="t sx" style="left:0;top:0;font-size:10.4px;color:#1c1c26;transform:scaleX(0.89);-webkit-text-stroke:.15px #1c1c26">11414</div></div>
<div style="left:891px;top:283.7px;width:93px;height:13px;overflow:hidden"><div class="t sx" style="left:0;top:0;font-size:10.4px;color:#1c1c26;transform:scaleX(0.89);-webkit-text-stroke:.15px #1c1c26">+49 30 42558</div></div>
<div style="left:989px;top:283.7px;width:84px;height:13px;overflow:hidden"><div class="t sx" style="left:0;top:0;font-size:10.4px;color:#2d6fae;transform:scaleX(0.865);-webkit-text-stroke:.15px #2d6fae">lothar.bechtner@gmx</div></div>
<div style="left:281px;top:314.99999999999994px;width:793px;height:1px;background:#dadde3"></div>
<div style="left:363px;top:297.79999999999995px;width:1px;height:18.2px;background:#dadde3"></div>
<div style="left:464px;top:297.79999999999995px;width:1px;height:18.2px;background:#dadde3"></div>
<div style="left:584px;top:297.79999999999995px;width:1px;height:18.2px;background:#dadde3"></div>
<div style="left:652px;top:297.79999999999995px;width:1px;height:18.2px;background:#dadde3"></div>
<div style="left:728px;top:297.79999999999995px;width:1px;height:18.2px;background:#dadde3"></div>
<div style="left:843px;top:297.79999999999995px;width:1px;height:18.2px;background:#dadde3"></div>
<div style="left:887px;top:297.79999999999995px;width:1px;height:18.2px;background:#dadde3"></div>
<div style="left:985px;top:297.79999999999995px;width:1px;height:18.2px;background:#dadde3"></div>
<div style="left:281px;top:297.79999999999995px;width:1px;height:18.2px;background:#dadde3"></div>
<div style="left:285px;top:300.9px;width:101px;height:13px;overflow:hidden"><div class="t sx" style="left:0;top:0;font-size:10.4px;color:#1c1c26;transform:scaleX(0.89);-webkit-text-stroke:.15px #1c1c26">22.05.2017</div></div>
<div style="left:367px;top:300.9px;width:96px;height:13px;overflow:hidden"><div class="t sx" style="left:0;top:0;font-size:10.4px;color:#1c1c26;transform:scaleX(0.89);-webkit-text-stroke:.15px #1c1c26">27.04.2017</div></div>
<div style="left:468px;top:300.9px;width:115px;height:13px;overflow:hidden"><div class="t sx" style="left:0;top:0;font-size:10.4px;color:#1c1c26;transform:scaleX(0.89);-webkit-text-stroke:.15px #1c1c26">Sant Gourmet</div></div>
<div style="left:588px;top:300.9px;width:63px;height:13px;overflow:hidden"><div class="t sx" style="left:0;top:0;font-size:10.4px;color:#1c1c26;transform:scaleX(0.89);-webkit-text-stroke:.15px #1c1c26">Rolf</div></div>
<div style="left:656px;top:300.9px;width:71px;height:13px;overflow:hidden"><div class="t sx" style="left:0;top:0;font-size:10.4px;color:#1c1c26;transform:scaleX(0.89);-webkit-text-stroke:.15px #1c1c26">Miegel</div></div>
<div style="left:732px;top:300.9px;width:110px;height:13px;overflow:hidden"><div class="t sx" style="left:0;top:0;font-size:10.4px;color:#1c1c26;transform:scaleX(0.89);-webkit-text-stroke:.15px #1c1c26">Rüppocher Str. 72</div></div>
<div style="left:847px;top:300.9px;width:39px;height:13px;overflow:hidden"><div class="t sx" style="left:0;top:0;font-size:10.4px;color:#1c1c26;transform:scaleX(0.89);-webkit-text-stroke:.15px #1c1c26">11326</div></div>
<div style="left:891px;top:300.9px;width:93px;height:13px;overflow:hidden"><div class="t sx" style="left:0;top:0;font-size:10.4px;color:#1c1c26;transform:scaleX(0.89);-webkit-text-stroke:.15px #1c1c26">+49 30 5830021</div></div>
<div style="left:989px;top:300.9px;width:84px;height:13px;overflow:hidden"><div class="t sx" style="left:0;top:0;font-size:10.4px;color:#2d6fae;transform:scaleX(0.865);-webkit-text-stroke:.15px #2d6fae">miegel@gourmet.de</div></div>
<div style="left:281px;top:332.19999999999993px;width:793px;height:1px;background:#dadde3"></div>
<div style="left:363px;top:314.99999999999994px;width:1px;height:18.2px;background:#dadde3"></div>
<div style="left:464px;top:314.99999999999994px;width:1px;height:18.2px;background:#dadde3"></div>
<div style="left:584px;top:314.99999999999994px;width:1px;height:18.2px;background:#dadde3"></div>
<div style="left:652px;top:314.99999999999994px;width:1px;height:18.2px;background:#dadde3"></div>
<div style="left:728px;top:314.99999999999994px;width:1px;height:18.2px;background:#dadde3"></div>
<div style="left:843px;top:314.99999999999994px;width:1px;height:18.2px;background:#dadde3"></div>
<div style="left:887px;top:314.99999999999994px;width:1px;height:18.2px;background:#dadde3"></div>
<div style="left:985px;top:314.99999999999994px;width:1px;height:18.2px;background:#dadde3"></div>
<div style="left:281px;top:314.99999999999994px;width:1px;height:18.2px;background:#dadde3"></div>
<div style="left:285px;top:318.1px;width:101px;height:13px;overflow:hidden"><div class="t sx" style="left:0;top:0;font-size:10.4px;color:#1c1c26;transform:scaleX(0.89);-webkit-text-stroke:.15px #1c1c26">22.05.2017</div></div>
<div style="left:367px;top:318.1px;width:96px;height:13px;overflow:hidden"><div class="t sx" style="left:0;top:0;font-size:10.4px;color:#1c1c26;transform:scaleX(0.89);-webkit-text-stroke:.15px #1c1c26">27.04.2017</div></div>
<div style="left:468px;top:318.1px;width:115px;height:13px;overflow:hidden"><div class="t sx" style="left:0;top:0;font-size:10.4px;color:#1c1c26;transform:scaleX(0.89);-webkit-text-stroke:.15px #1c1c26">Königlich Essen</div></div>
<div style="left:588px;top:318.1px;width:63px;height:13px;overflow:hidden"><div class="t sx" style="left:0;top:0;font-size:10.4px;color:#1c1c26;transform:scaleX(0.89);-webkit-text-stroke:.15px #1c1c26">Albert</div></div>
<div style="left:656px;top:318.1px;width:71px;height:13px;overflow:hidden"><div class="t sx" style="left:0;top:0;font-size:10.4px;color:#1c1c26;transform:scaleX(0.89);-webkit-text-stroke:.15px #1c1c26">Dietel</div></div>
<div style="left:732px;top:318.1px;width:110px;height:13px;overflow:hidden"><div class="t sx" style="left:0;top:0;font-size:10.4px;color:#1c1c26;transform:scaleX(0.89);-webkit-text-stroke:.15px #1c1c26">Ursulinenstr. 19</div></div>
<div style="left:847px;top:318.1px;width:39px;height:13px;overflow:hidden"><div class="t sx" style="left:0;top:0;font-size:10.4px;color:#1c1c26;transform:scaleX(0.89);-webkit-text-stroke:.15px #1c1c26">11326</div></div>
<div style="left:891px;top:318.1px;width:93px;height:13px;overflow:hidden"><div class="t sx" style="left:0;top:0;font-size:10.4px;color:#1c1c26;transform:scaleX(0.89);-webkit-text-stroke:.15px #1c1c26">+49 30 30303301</div></div>
<div style="left:989px;top:318.1px;width:84px;height:13px;overflow:hidden"><div class="t sx" style="left:0;top:0;font-size:10.4px;color:#2d6fae;transform:scaleX(0.865);-webkit-text-stroke:.15px #2d6fae">albert.dietel@koenigl</div></div>
<div style="left:281px;top:349.3999999999999px;width:793px;height:1px;background:#dadde3"></div>
<div style="left:363px;top:332.19999999999993px;width:1px;height:18.2px;background:#dadde3"></div>
<div style="left:464px;top:332.19999999999993px;width:1px;height:18.2px;background:#dadde3"></div>
<div style="left:584px;top:332.19999999999993px;width:1px;height:18.2px;background:#dadde3"></div>
<div style="left:652px;top:332.19999999999993px;width:1px;height:18.2px;background:#dadde3"></div>
<div style="left:728px;top:332.19999999999993px;width:1px;height:18.2px;background:#dadde3"></div>
<div style="left:843px;top:332.19999999999993px;width:1px;height:18.2px;background:#dadde3"></div>
<div style="left:887px;top:332.19999999999993px;width:1px;height:18.2px;background:#dadde3"></div>
<div style="left:985px;top:332.19999999999993px;width:1px;height:18.2px;background:#dadde3"></div>
<div style="left:281px;top:332.19999999999993px;width:1px;height:18.2px;background:#dadde3"></div>
<div style="left:285px;top:335.3px;width:101px;height:13px;overflow:hidden"><div class="t sx" style="left:0;top:0;font-size:10.4px;color:#1c1c26;transform:scaleX(0.89);-webkit-text-stroke:.15px #1c1c26">25.05.2017</div></div>
<div style="left:367px;top:335.3px;width:96px;height:13px;overflow:hidden"><div class="t sx" style="left:0;top:0;font-size:10.4px;color:#1c1c26;transform:scaleX(0.89);-webkit-text-stroke:.15px #1c1c26">25.04.2017</div></div>
<div style="left:468px;top:335.3px;width:115px;height:13px;overflow:hidden"><div class="t sx" style="left:0;top:0;font-size:10.4px;color:#1c1c26;transform:scaleX(0.89);-webkit-text-stroke:.15px #1c1c26">Drachenblut Delikatessen</div></div>
<div style="left:588px;top:335.3px;width:63px;height:13px;overflow:hidden"><div class="t sx" style="left:0;top:0;font-size:10.4px;color:#1c1c26;transform:scaleX(0.89);-webkit-text-stroke:.15px #1c1c26">Annette</div></div>
<div style="left:656px;top:335.3px;width:71px;height:13px;overflow:hidden"><div class="t sx" style="left:0;top:0;font-size:10.4px;color:#1c1c26;transform:scaleX(0.89);-webkit-text-stroke:.15px #1c1c26">Seibel</div></div>
<div style="left:732px;top:335.3px;width:110px;height:13px;overflow:hidden"><div class="t sx" style="left:0;top:0;font-size:10.4px;color:#1c1c26;transform:scaleX(0.89);-webkit-text-stroke:.15px #1c1c26">Mauerweg 88</div></div>
<div style="left:847px;top:335.3px;width:39px;height:13px;overflow:hidden"><div class="t sx" style="left:0;top:0;font-size:10.4px;color:#1c1c26;transform:scaleX(0.89);-webkit-text-stroke:.15px #1c1c26">16214</div></div>
<div style="left:891px;top:335.3px;width:93px;height:13px;overflow:hidden"><div class="t sx" style="left:0;top:0;font-size:10.4px;color:#1c1c26;transform:scaleX(0.89);-webkit-text-stroke:.15px #1c1c26">+49 30 12398383791</div></div>
<div style="left:989px;top:335.3px;width:84px;height:13px;overflow:hidden"><div class="t sx" style="left:0;top:0;font-size:10.4px;color:#2d6fae;transform:scaleX(0.865);-webkit-text-stroke:.15px #2d6fae">ann.seibel@drachenl</div></div>
<div style="left:256px;top:349.3999999999999px;width:818px;height:25.5px;background:#bde0ed;border-top:1px solid #b3c6ce"></div>
<div style="left:257px;top:374.8999999999999px;width:817px;height:1px;background:#d9d9d9"></div>
<svg style="left:273px;top:358.1499999999999px" width="6" height="6" viewBox="0 0 6 6"><polygon points="5.5,0.5 5.5,5.5 0.5,5.5" fill="#1f6fa8"/></svg>
<div class="t sx" style="left:283.8px;top:355.6499999999999px;font-size:10.5px;color:#262626;font-weight:700;transform:scaleX(0.92);">Ort : Duisburg</div>
<div style="left:281px;top:392.0999999999999px;width:793px;height:1px;background:#dadde3"></div>
<div style="left:363px;top:374.8999999999999px;width:1px;height:18.2px;background:#dadde3"></div>
<div style="left:464px;top:374.8999999999999px;width:1px;height:18.2px;background:#dadde3"></div>
<div style="left:584px;top:374.8999999999999px;width:1px;height:18.2px;background:#dadde3"></div>
<div style="left:652px;top:374.8999999999999px;width:1px;height:18.2px;background:#dadde3"></div>
<div style="left:728px;top:374.8999999999999px;width:1px;height:18.2px;background:#dadde3"></div>
<div style="left:843px;top:374.8999999999999px;width:1px;height:18.2px;background:#dadde3"></div>
<div style="left:887px;top:374.8999999999999px;width:1px;height:18.2px;background:#dadde3"></div>
<div style="left:985px;top:374.8999999999999px;width:1px;height:18.2px;background:#dadde3"></div>
<div style="left:281px;top:374.8999999999999px;width:1px;height:18.2px;background:#dadde3"></div>
<div style="left:281px;top:374.8999999999999px;width:82px;height:17.2px;background:#de3126"></div>
<div style="left:285px;top:378.0px;width:101px;height:13px;overflow:hidden"><div class="t sx" style="left:0;top:0;font-size:10.4px;color:#fbe9e0;transform:scaleX(0.89);-webkit-text-stroke:.15px #fbe9e0">17.05.2017</div></div>
<div style="left:367px;top:378.0px;width:96px;height:13px;overflow:hidden"><div class="t sx" style="left:0;top:0;font-size:10.4px;color:#1c1c26;transform:scaleX(0.89);-webkit-text-stroke:.15px #1c1c26">05.05.2017</div></div>
<div style="left:468px;top:378.0px;width:115px;height:13px;overflow:hidden"><div class="t sx" style="left:0;top:0;font-size:10.4px;color:#1c1c26;transform:scaleX(0.89);-webkit-text-stroke:.15px #1c1c26">France Restauration</div></div>
<div style="left:588px;top:378.0px;width:63px;height:13px;overflow:hidden"><div class="t sx" style="left:0;top:0;font-size:10.4px;color:#1c1c26;transform:scaleX(0.89);-webkit-text-stroke:.15px #1c1c26">Inge</div></div>
<div style="left:656px;top:378.0px;width:71px;height:13px;overflow:hidden"><div class="t sx" style="left:0;top:0;font-size:10.4px;color:#1c1c26;transform:scaleX(0.89);-webkit-text-stroke:.15px #1c1c26">Blaubach</div></div>
<div style="left:732px;top:378.0px;width:110px;height:13px;overflow:hidden"><div class="t sx" style="left:0;top:0;font-size:10.4px;color:#1c1c26;transform:scaleX(0.89);-webkit-text-stroke:.15px #1c1c26">Postalweg 12</div></div>
<div style="left:847px;top:378.0px;width:39px;height:13px;overflow:hidden"><div class="t sx" style="left:0;top:0;font-size:10.4px;color:#1c1c26;transform:scaleX(0.89);-webkit-text-stroke:.15px #1c1c26">41431</div></div>
<div style="left:891px;top:378.0px;width:93px;height:13px;overflow:hidden"><div class="t sx" style="left:0;top:0;font-size:10.4px;color:#1c1c26;transform:scaleX(0.89);-webkit-text-stroke:.15px #1c1c26">+49 231 2313231231</div></div>
<div style="left:989px;top:378.0px;width:84px;height:13px;overflow:hidden"><div class="t sx" style="left:0;top:0;font-size:10.4px;color:#2d6fae;transform:scaleX(0.865);-webkit-text-stroke:.15px #2d6fae">ingebl@france-restau</div></div>
<div style="left:257px;top:417.5999999999999px;width:817px;height:1px;background:#d9d9d9"></div>
<svg style="left:273px;top:400.8499999999999px" width="6" height="8" viewBox="0 0 6 8"><polygon points="1,0.5 5,4 1,7.5" fill="#555"/></svg>
<div class="t sx" style="left:283.8px;top:398.3499999999999px;font-size:10.5px;color:#262626;font-weight:700;transform:scaleX(0.92);">Ort : Düsseldorf</div>
<div style="left:257px;top:443.0999999999999px;width:817px;height:1px;background:#d9d9d9"></div>
<svg style="left:273px;top:426.3499999999999px" width="6" height="8" viewBox="0 0 6 8"><polygon points="1,0.5 5,4 1,7.5" fill="#555"/></svg>
<div class="t sx" style="left:283.8px;top:423.8499999999999px;font-size:10.5px;color:#262626;font-weight:700;transform:scaleX(0.92);">Ort : Frankfurt</div>
<div style="left:257px;top:468.5999999999999px;width:817px;height:1px;background:#d9d9d9"></div>
<svg style="left:273px;top:451.8499999999999px" width="6" height="8" viewBox="0 0 6 8"><polygon points="1,0.5 5,4 1,7.5" fill="#555"/></svg>
<div class="t sx" style="left:283.8px;top:449.3499999999999px;font-size:10.5px;color:#262626;font-weight:700;transform:scaleX(0.92);">Ort : Hamburg</div>
<div style="left:257px;top:494.0999999999999px;width:817px;height:1px;background:#d9d9d9"></div>
<svg style="left:273px;top:477.3499999999999px" width="6" height="8" viewBox="0 0 6 8"><polygon points="1,0.5 5,4 1,7.5" fill="#555"/></svg>
<div class="t sx" style="left:283.8px;top:474.8499999999999px;font-size:10.5px;color:#262626;font-weight:700;transform:scaleX(0.92);">Ort : Hannover</div>
<div style="left:257px;top:519.5999999999999px;width:817px;height:1px;background:#d9d9d9"></div>
<svg style="left:273px;top:502.8499999999999px" width="6" height="8" viewBox="0 0 6 8"><polygon points="1,0.5 5,4 1,7.5" fill="#555"/></svg>
<div class="t sx" style="left:283.8px;top:500.3499999999999px;font-size:10.5px;color:#262626;font-weight:700;transform:scaleX(0.92);">Ort : Köln</div>
<div style="left:257px;top:545.0999999999999px;width:817px;height:1px;background:#d9d9d9"></div>
<svg style="left:273px;top:528.3499999999999px" width="6" height="8" viewBox="0 0 6 8"><polygon points="1,0.5 5,4 1,7.5" fill="#555"/></svg>
<div class="t sx" style="left:283.8px;top:525.8499999999999px;font-size:10.5px;color:#262626;font-weight:700;transform:scaleX(0.92);">Ort : München</div>
<svg style="left:270px;top:360px" width="14" height="22" viewBox="0 0 14 22"><path d="M1,1 V16 L4.5,12.5 L7.5,19 L10,18 L7,11.5 H12 Z" fill="#fff" stroke="#222" stroke-width="1"/></svg>
<div style="left:256px;top:555px;width:832px;height:14px;background:#ececec"></div>
<div style="left:271px;top:556px;width:774px;height:12px;background:#b3b3b3"></div>
<svg style="left:259px;top:558px" width="8" height="8" viewBox="0 0 8 8"><polyline points="6,1 2,4 6,7" fill="none" stroke="#444" stroke-width="1.4"/></svg>
<svg style="left:1063px;top:558px" width="8" height="8" viewBox="0 0 8 8"><polyline points="2,1 6,4 2,7" fill="none" stroke="#444" stroke-width="1.4"/></svg>
<div style="left:262px;top:575px;width:12px;height:12px;background:#fff;border:1px solid #cfcfcf"></div>
<svg style="left:263px;top:576px" width="10" height="10" viewBox="0 0 10 10"><polyline points="1.5,5 4,8 8.5,1.5" fill="none" stroke="#c4c4c4" stroke-width="1.2"/></svg>
<svg style="left:283px;top:579px" width="7" height="4" viewBox="0 0 7 4"><polygon points="0,0 7,0 3.5,3.5" fill="#222"/></svg>
<svg style="left:1050px;top:574px" width="15" height="15" viewBox="0 0 15 15"><path d="M2,13.5 L3,9.5 L11,1.5 L14,4.5 L6,12.5 Z" fill="#8a8a8a" stroke="#333" stroke-width="1"/><line x1="4" y1="9" x2="7" y2="12" stroke="#333"/></svg>
<svg style="left:1069px;top:573px" width="15" height="15" viewBox="0 0 15 15"><circle cx="7.5" cy="7.5" r="6.5" fill="#d6d6d6"/><path d="M4.5,4.5 L10.5,10.5 M10.5,4.5 L4.5,10.5" stroke="#fff" stroke-width="2"/></svg>
</body></html>
